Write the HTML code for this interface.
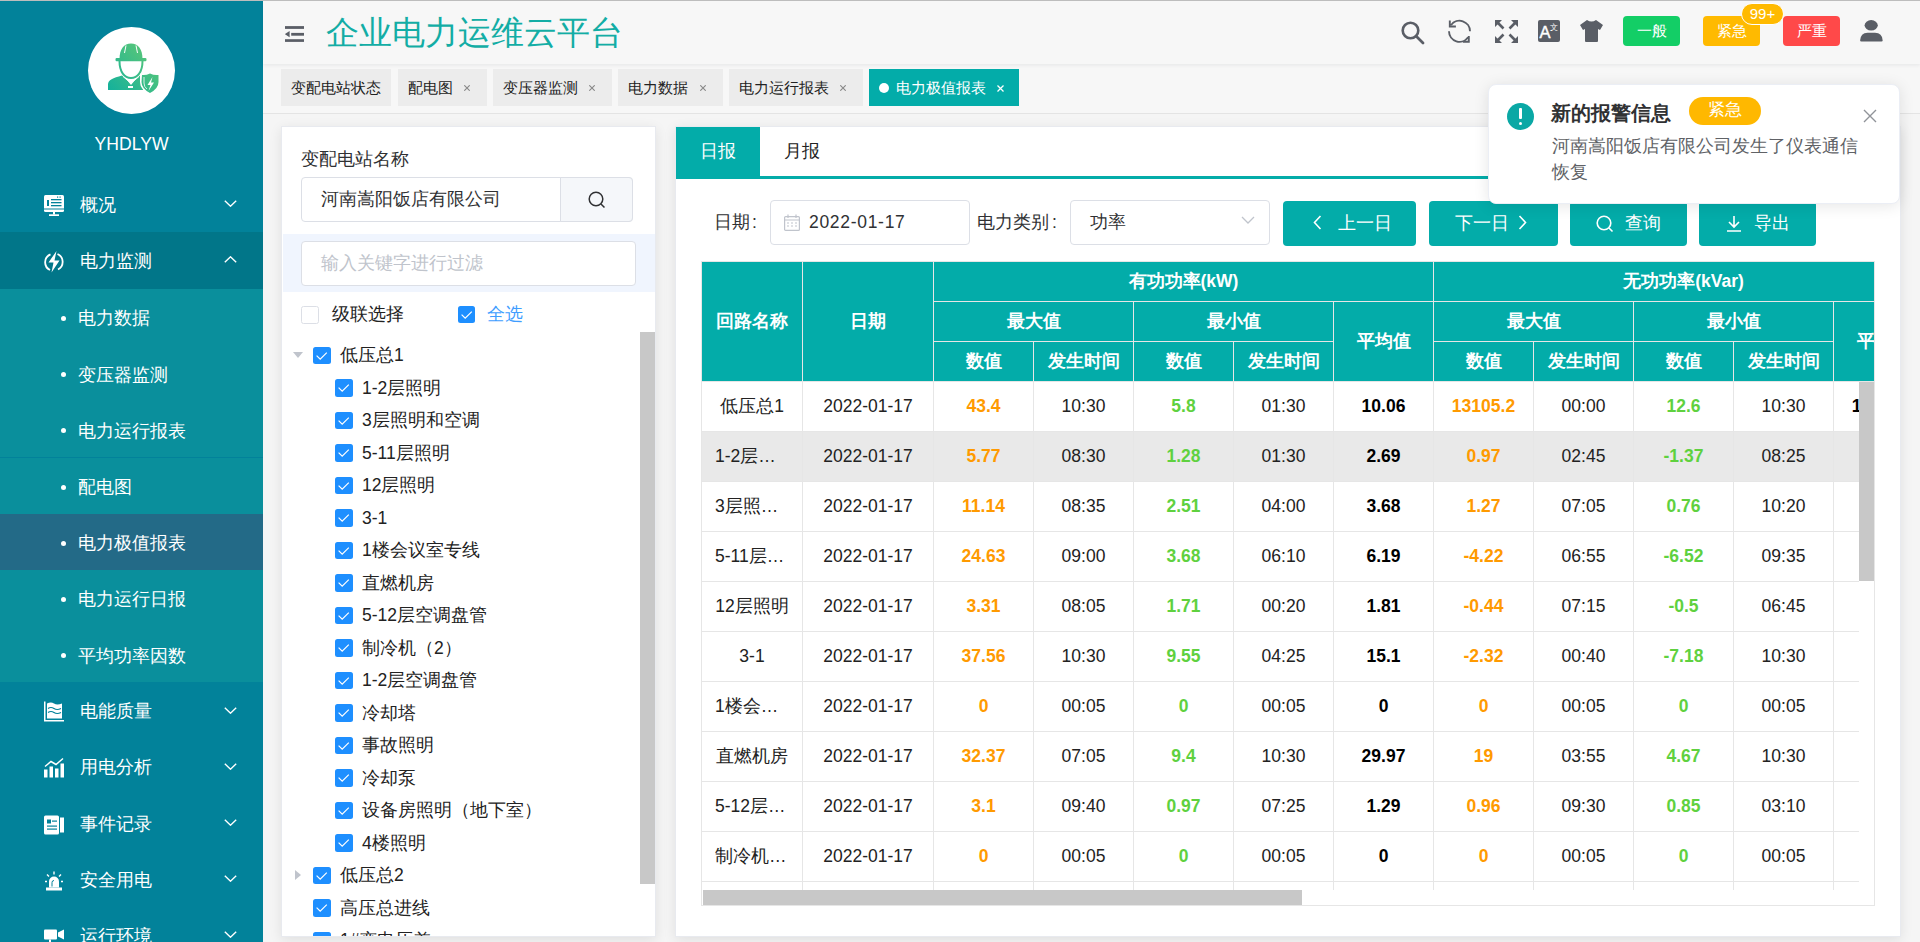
<!DOCTYPE html>
<html><head><meta charset="utf-8"><style>
*{box-sizing:border-box;margin:0;padding:0}
html,body{width:1920px;height:942px;overflow:hidden}
body{font-family:"Liberation Sans",sans-serif;background:#f5f5f5;position:relative;color:#303133}
.abs{position:absolute}
.topline{position:absolute;left:0;top:0;width:1920px;height:1px;background:#bdbdbd;z-index:50}
#side{position:absolute;left:0;top:0;width:263px;height:942px;background:#02829a;overflow:hidden;color:#fff}
.logo{position:absolute;left:88px;top:27px;width:87px;height:87px;border-radius:50%;background:#fff}
.uname{position:absolute;left:0;width:263px;top:133px;text-align:center;font-size:17.6px;line-height:22px}
.mi{position:absolute;left:0;width:263px;height:57.1px;font-size:17.5px;line-height:56px}
.mi .t{position:absolute;left:80px;top:1px}
.mi svg.ic{position:absolute;left:44px;top:19px;width:20px;height:21px}
.mi svg.ar{position:absolute;left:224px;top:24.5px;width:13px;height:7px}
.sub{position:absolute;left:0;width:263px;height:56.2px;font-size:17.5px;line-height:56px;background:#0a8f9c}
.sub .t{position:absolute;left:78px;top:1.5px}
.sub .dot{position:absolute;left:61px;top:27px;width:5px;height:5px;border-radius:50%;background:#fff}
#hdr{position:absolute;left:263px;top:0;width:1657px;height:64px;background:#f7f7f7;box-shadow:0 1px 4px rgba(0,21,41,.08);z-index:5}
#tags{position:absolute;left:263px;top:64px;width:1657px;height:50px;background:#f7f7f7;border-bottom:1px solid #e4e4e4}
.tag{position:absolute;top:5px;height:37px;background:#ececec;font-size:15px;line-height:37px;color:#222;padding-left:10px;white-space:nowrap}
.tag .x{position:absolute;top:0;font-size:13px;color:#777}
.card{position:absolute;background:#fff;box-shadow:0 3px 12px rgba(0,0,0,.09);border:1px solid #e8eaef}
.cb{position:absolute;width:17.5px;height:17.5px;border-radius:2.5px;background:#1e8fff}
.cb svg{position:absolute;left:0;top:0;width:17.5px;height:17.5px}
.tn{position:absolute;font-size:17.5px;line-height:22px;color:#222;white-space:nowrap}
.btn{position:absolute;top:201px;height:45px;background:#03aca9;border-radius:4px;color:#fff;font-size:17.5px;line-height:45px;white-space:nowrap}
.th{position:absolute;background:#03aca9;color:#fff;font-weight:bold;font-size:17.5px;text-align:center;border-right:1px solid #e6e6e6;border-bottom:1px solid #e6e6e6;display:flex;align-items:center;justify-content:center;white-space:nowrap;overflow:hidden;padding-bottom:2px}
.row{position:absolute;left:0;height:50px;width:1300px;border-bottom:1px solid #e6e6e6}
.td{position:absolute;top:0;height:49px;border-right:1px solid #e6e6e6;text-align:center;line-height:49px;font-size:17.5px;color:#222;white-space:nowrap;overflow:hidden}
.o{color:#ff9a00;font-weight:bold}
.g{color:#5fd13f;font-weight:bold}
.b{color:#000;font-weight:bold}
</style></head><body>
<div class="topline"></div>
<div id="side">
<div class="logo"><svg style="position:absolute;left:0;top:0" width="87" height="87" viewBox="88 27 87 87"><defs><linearGradient id="lg" gradientUnits="userSpaceOnUse" x1="108" y1="92" x2="158" y2="45"><stop offset="0" stop-color="#12b09c"/><stop offset="1" stop-color="#66ca72"/></linearGradient></defs><path d="M119.5 59 C119.5 49 124 43.5 131 43.5 C138 43.5 142.5 49 142.5 59 Z" fill="url(#lg)"/><rect x="115.5" y="58" width="31" height="3.2" rx="1.2" fill="url(#lg)"/><path d="M126 45.5 L124.5 53 M136 45.5 L137.5 53" stroke="#fff" stroke-width="1"/><path d="M119.5 61 C119.5 72 124.5 78 131 78 C137.5 78 142.5 72 142.5 61" fill="none" stroke="url(#lg)" stroke-width="2"/><path d="M108 90 L108 84.5 C108 80 113 78 122 75.5 L127 80 L131 85 L135 80 L140 75.5 C141 76 142 76.5 143 77.5 L143 90 Z" fill="url(#lg)"/><path d="M123 76.5 L129.5 82 M139 76.5 L132.5 82" stroke="#fff" stroke-width="0.9"/><rect x="128" y="86" width="5" height="2" fill="#fff"/><path d="M140 73.5 Q145 74.5 150 72 Q155 74.5 160 73.5 L160 82 Q160 89.5 150 94.5 Q140 89.5 140 82 Z" fill="#fff"/><path d="M142 75 Q146 75.5 150 73.5 Q154 75.5 158.5 75 L158.5 82 Q158.5 88.5 150 93 Q141.5 88.5 141.5 82 Z" fill="url(#lg)"/><path d="M144 77 L144 83 Q144 87 147 89" fill="none" stroke="#fff" stroke-width="0.8"/><path d="M152.5 77 L147.5 85 L150.5 85 L148.5 91 L154 82.5 L151 82.5 Z" fill="#fff"/></svg></div>
<div class="uname">YHDLYW</div>
<div class="mi" style="top:175.5px"><svg class="ic" viewBox="0 0 20 21"><rect x="0" y="0" width="20" height="17" rx="1.5" fill="#fff"/><rect x="3" y="5" width="2" height="6" fill="#02829a"/><rect x="7" y="4" width="10.5" height="1.3" fill="#02829a"/><rect x="7" y="7" width="10.5" height="1.3" fill="#02829a"/><rect x="7" y="10" width="10.5" height="1.3" fill="#02829a"/><rect x="13" y="1.5" width="1.2" height="1.2" fill="#02829a"/><rect x="15.5" y="1.5" width="1.2" height="1.2" fill="#02829a"/><rect x="0" y="13.5" width="20" height="1" fill="#02829a"/><rect x="9" y="17" width="2" height="2.5" fill="#fff"/><rect x="5" y="19.3" width="10" height="1.7" fill="#fff"/></svg><span class="t">概况</span><svg class="ar" viewBox="0 0 13 7"><path d="M0.8 0.8 L6.5 6.2 L12.2 0.8" fill="none" stroke="#fff" stroke-width="1.4"/></svg></div>
<div class="mi" style="top:231.7px;background:#017689"><svg class="ic" viewBox="0 0 20 20" style="overflow:visible"><path d="M6.5 2.8 A8.6 8.6 0 0 0 6 18.5" fill="none" stroke="#fff" stroke-width="1.8"/><path d="M13.5 2.5 A8.6 8.6 0 0 1 14 18" fill="none" stroke="#fff" stroke-width="1.8"/><path d="M12.5 -0.5 L4.5 11 L9.5 11 L7.5 21 L15.5 9 L10.5 9 Z" fill="#fff"/></svg><span class="t">电力监测</span><svg class="ar" viewBox="0 0 13 7"><path d="M0.8 6.2 L6.5 0.8 L12.2 6.2" fill="none" stroke="#fff" stroke-width="1.4"/></svg></div>
<div class="sub" style="top:288.9px"><span class="dot"></span><span class="t">电力数据</span></div>
<div class="sub" style="top:345.1px"><span class="dot"></span><span class="t">变压器监测</span></div>
<div class="sub" style="top:401.3px"><span class="dot"></span><span class="t">电力运行报表</span></div>
<div class="sub" style="top:457.5px"><span class="dot"></span><span class="t">配电图</span></div>
<div class="sub" style="top:513.7px;background:#236a87"><span class="dot"></span><span class="t">电力极值报表</span></div>
<div class="sub" style="top:569.9px"><span class="dot"></span><span class="t">电力运行日报</span></div>
<div class="sub" style="top:626.1px"><span class="dot"></span><span class="t">平均功率因数</span></div>
<div class="mi" style="top:682.3px"><svg class="ic" viewBox="0 0 20 20"><path d="M0 0 V20 H20 V18.5 H1.5 V0 Z" fill="#fff"/><path d="M3 2 Q7 0 10 2 T18 2 V17 H3 Z" fill="#fff"/><path d="M4 7 Q7 5 10 7 T17 7 M4 11 Q7 9 10 11 T17 11" fill="none" stroke="#02829a" stroke-width="1.2"/></svg><span class="t">电能质量</span><svg class="ar" viewBox="0 0 13 7"><path d="M0.8 0.8 L6.5 6.2 L12.2 0.8" fill="none" stroke="#fff" stroke-width="1.4"/></svg></div>
<div class="mi" style="top:738.4px"><svg class="ic" viewBox="0 0 20 20"><rect x="0" y="12" width="3.5" height="8" fill="#fff"/><rect x="5.5" y="9" width="3.5" height="11" fill="#fff"/><rect x="11" y="11" width="3.5" height="9" fill="#fff"/><rect x="16.5" y="6" width="3.5" height="14" fill="#fff"/><path d="M1 9 L7 4 L12 7 L19 1" fill="none" stroke="#fff" stroke-width="1.5"/></svg><span class="t">用电分析</span><svg class="ar" viewBox="0 0 13 7"><path d="M0.8 0.8 L6.5 6.2 L12.2 0.8" fill="none" stroke="#fff" stroke-width="1.4"/></svg></div>
<div class="mi" style="top:794.5px"><svg class="ic" viewBox="0 0 20 20"><rect x="0" y="1" width="15" height="19" rx="1.5" fill="#fff"/><rect x="16" y="3" width="4" height="15" fill="#fff"/><rect x="3" y="5" width="4" height="4" fill="#02829a"/><rect x="8" y="6" width="5" height="1.2" fill="#02829a"/><rect x="3" y="11" width="10" height="1.2" fill="#02829a"/><rect x="3" y="14" width="10" height="1.2" fill="#02829a"/></svg><span class="t">事件记录</span><svg class="ar" viewBox="0 0 13 7"><path d="M0.8 0.8 L6.5 6.2 L12.2 0.8" fill="none" stroke="#fff" stroke-width="1.4"/></svg></div>
<div class="mi" style="top:850.6px"><svg class="ic" viewBox="0 0 20 20"><path d="M5 17 V11 A5 5 0 0 1 15 11 V17 Z" fill="#fff"/><rect x="2" y="17" width="16" height="3" fill="#fff"/><rect x="9.3" y="1" width="1.4" height="3" fill="#fff"/><path d="M3 4 L5 6 M17 4 L15 6 M1 11 H3 M17 11 H19" stroke="#fff" stroke-width="1.4"/><path d="M8 16 V12 A2 2 0 0 1 10 10" fill="none" stroke="#02829a" stroke-width="1"/></svg><span class="t">安全用电</span><svg class="ar" viewBox="0 0 13 7"><path d="M0.8 0.8 L6.5 6.2 L12.2 0.8" fill="none" stroke="#fff" stroke-width="1.4"/></svg></div>
<div class="mi" style="top:906.7px"><svg class="ic" viewBox="0 0 20 20"><rect x="0" y="3" width="13" height="10" rx="1" fill="#fff"/><path d="M14 6 L20 3 V13 L14 10 Z" fill="#fff"/><rect x="5" y="13" width="2" height="7" fill="#fff"/></svg><span class="t">运行环境</span><svg class="ar" viewBox="0 0 13 7"><path d="M0.8 0.8 L6.5 6.2 L12.2 0.8" fill="none" stroke="#fff" stroke-width="1.4"/></svg></div>
</div>
<div id="hdr">
<svg class="abs" style="left:22px;top:26px" width="19" height="16" viewBox="0 0 19 16"><rect x="0" y="0.1" width="19" height="2.8" fill="#5a5e66"/><rect x="6.2" y="6.9" width="12.8" height="2.8" fill="#5a5e66"/><rect x="0" y="13.2" width="19" height="2.7" fill="#5a5e66"/><path d="M-0.2 8.2 L4.6 5 V11.2 Z" fill="#5a5e66"/></svg>
<div class="abs" style="left:63px;top:11px;font-size:32.5px;line-height:44px;color:#13ada5;white-space:nowrap">企业电力运维云平台</div>
<svg class="abs" style="left:1138px;top:21px" width="24" height="24" viewBox="0 0 24 24"><circle cx="9.5" cy="9.5" r="7.8" fill="none" stroke="#5a5e66" stroke-width="2.6"/><path d="M15.5 15.5 L22 22" stroke="#5a5e66" stroke-width="2.8" stroke-linecap="round"/></svg>
<svg class="abs" style="left:1184px;top:19px" width="24" height="24" viewBox="0 0 24 24"><path d="M23 12.3 A10.5 10.5 0 0 0 4.1 6.0 M2.8 1.4 V7.5 H8.9 M2 12.3 A10.5 10.5 0 0 0 21.1 18.3 M21.8 17 V22.8 H16" fill="none" stroke="#5a5e66" stroke-width="1.9"/></svg>
<svg class="abs" style="left:1232px;top:20px" width="23" height="23" viewBox="0 0 23 23"><path d="M0 0 H7 L0 7 Z M23 0 V7 L16 0 Z M0 23 V16 L7 23 Z M23 23 H16 L23 16 Z" fill="#5a5e66"/><path d="M2 2 L8.5 8.5 M21 2 L14.5 8.5 M2 21 L8.5 14.5 M21 21 L14.5 14.5" stroke="#5a5e66" stroke-width="2.6"/></svg>
<div class="abs" style="left:1275px;top:20px;width:22px;height:22px;background:#5a5e66;border-radius:2px;overflow:hidden"><span class="abs" style="left:1.5px;top:4.3px;font-size:16.5px;line-height:16px;color:#fff;-webkit-text-stroke:0.4px #fff">A</span><span class="abs" style="left:12px;top:3px;font-size:8px;line-height:9px;color:#fff">文</span></div>
<svg class="abs" style="left:1317px;top:20px" width="23" height="22" viewBox="0 0 23 22"><path d="M7 0 Q11.5 3 16 0 L23 5 L20 10 L18 9 V21 Q18 22 17 22 H6 Q5 22 5 21 V9 L3 10 L0 5 Z" fill="#5a5e66"/></svg>
<div class="abs" style="left:1360px;top:16px;width:57px;height:30px;border-radius:4px;background:#13ce66;color:#fff;font-size:15px;line-height:30px;text-align:center">一般</div>
<div class="abs" style="left:1440px;top:16px;width:57px;height:30px;border-radius:4px;background:#ffba00;color:#fff;font-size:15px;line-height:30px;text-align:center">紧急</div>
<div class="abs" style="left:1520px;top:16px;width:57px;height:30px;border-radius:4px;background:#ff4949;color:#fff;font-size:15px;line-height:30px;text-align:center">严重</div>
<div class="abs" style="left:1478px;top:3px;width:43px;height:22px;border-radius:11px;background:#ffba00;border:1.5px solid #fff;color:#fff;font-size:15px;line-height:19px;text-align:center">99+</div>
<svg class="abs" style="left:1596px;top:19px" width="25" height="24" viewBox="0 0 25 24"><ellipse cx="12.2" cy="6.35" rx="6.6" ry="5.25" fill="#5a5e66"/><path d="M1.1 21.5 Q1.6 13.8 8.5 13.8 H16 Q23.2 13.8 23.7 21.5 Q23.7 22.4 22.5 22.4 H2.3 Q1.1 22.4 1.1 21.5 Z" fill="#5a5e66"/></svg>
</div>
<div id="tags">
<div class="tag" style="left:18px;width:110px">变配电站状态</div>
<div class="tag" style="left:135px;width:89px">配电图<svg class="abs" style="left:65.5px;top:16px" width="6" height="6" viewBox="0 0 6 6"><path d="M0.3 0.3 L5.7 5.7 M5.7 0.3 L0.3 5.7" stroke="#888" stroke-width="1.1"/></svg></div>
<div class="tag" style="left:230px;width:119px">变压器监测<svg class="abs" style="left:95.5px;top:16px" width="6" height="6" viewBox="0 0 6 6"><path d="M0.3 0.3 L5.7 5.7 M5.7 0.3 L0.3 5.7" stroke="#888" stroke-width="1.1"/></svg></div>
<div class="tag" style="left:355px;width:105px">电力数据<svg class="abs" style="left:81.5px;top:16px" width="6" height="6" viewBox="0 0 6 6"><path d="M0.3 0.3 L5.7 5.7 M5.7 0.3 L0.3 5.7" stroke="#888" stroke-width="1.1"/></svg></div>
<div class="tag" style="left:466px;width:134px">电力运行报表<svg class="abs" style="left:110.5px;top:16px" width="6" height="6" viewBox="0 0 6 6"><path d="M0.3 0.3 L5.7 5.7 M5.7 0.3 L0.3 5.7" stroke="#888" stroke-width="1.1"/></svg></div>
<div class="tag" style="left:606px;width:150px;background:#03aca9;color:#fff"><span class="abs" style="left:10px;top:14px;width:10px;height:10px;border-radius:50%;background:#fff"></span><span class="abs" style="left:27px;top:0">电力极值报表</span><svg class="abs" style="left:128px;top:16px" width="7" height="7" viewBox="0 0 7 7"><path d="M0.5 0.5 L6.5 6.5 M6.5 0.5 L0.5 6.5" stroke="#fff" stroke-width="1.3"/></svg></div>
</div>
<div class="card" style="left:281px;top:126px;width:375px;height:811px;overflow:hidden">
<div class="abs" style="left:19px;top:21px;font-size:17.5px;line-height:22px;color:#303133">变配电站名称</div>
<div class="abs" style="left:19px;top:50px;width:332px;height:45px;border:1px solid #dcdfe6;border-radius:4px;background:#fff"></div>
<div class="abs" style="left:39px;top:61px;font-size:17.5px;line-height:22px;color:#303133">河南嵩阳饭店有限公司</div>
<div class="abs" style="left:278px;top:50px;width:73px;height:45px;border:1px solid #dcdfe6;border-radius:0 4px 4px 0;background:#f5f7fa"></div>
<svg class="abs" style="left:306px;top:64px" width="18" height="18" viewBox="0 0 18 18"><circle cx="8" cy="8" r="6.8" fill="none" stroke="#303133" stroke-width="1.5"/><path d="M13 13 L16.5 16.5" stroke="#303133" stroke-width="1.5"/></svg>
<div class="abs" style="left:1px;top:107px;width:372px;height:58px;background:#f0f5fe"></div>
<div class="abs" style="left:19px;top:114px;width:335px;height:45px;border:1px solid #dcdfe6;border-radius:4px;background:#fff"></div>
<div class="abs" style="left:39px;top:125px;font-size:17.5px;line-height:22px;color:#c0c4cc">输入关键字进行过滤</div>
<div class="abs" style="left:19px;top:179px;width:18px;height:18px;border:1px solid #dcdfe6;border-radius:2.5px;background:#fff"></div>
<div class="tn" style="left:50px;top:176px">级联选择</div>
<div class="cb" style="left:176px;top:179px;width:17px;height:17px"><svg viewBox="0 0 17.5 17.5"><path d="M3.6 8.6 L7.2 12.2 L13.8 5.6" fill="none" stroke="#fff" stroke-width="1.2"/></svg></div>
<div class="tn" style="left:205px;top:176px;color:#409eff">全选</div>
<div class="abs" style="left:1px;top:205px;width:372px;height:604px;overflow:hidden">
<svg class="abs" style="left:10px;top:20.0px" width="10" height="6" viewBox="0 0 10 6"><path d="M0 0 H10 L5 6 Z" fill="#c0c4cc"/></svg>
<div class="cb" style="left:30px;top:14.5px"><svg viewBox="0 0 17.5 17.5"><path d="M3.6 8.6 L7.2 12.2 L13.8 5.6" fill="none" stroke="#fff" stroke-width="1.2"/></svg></div>
<div class="tn" style="left:57px;top:12.0px">低压总1</div>
<div class="cb" style="left:52px;top:47.0px"><svg viewBox="0 0 17.5 17.5"><path d="M3.6 8.6 L7.2 12.2 L13.8 5.6" fill="none" stroke="#fff" stroke-width="1.2"/></svg></div>
<div class="tn" style="left:79px;top:44.5px">1-2层照明</div>
<div class="cb" style="left:52px;top:79.5px"><svg viewBox="0 0 17.5 17.5"><path d="M3.6 8.6 L7.2 12.2 L13.8 5.6" fill="none" stroke="#fff" stroke-width="1.2"/></svg></div>
<div class="tn" style="left:79px;top:77.0px">3层照明和空调</div>
<div class="cb" style="left:52px;top:112.0px"><svg viewBox="0 0 17.5 17.5"><path d="M3.6 8.6 L7.2 12.2 L13.8 5.6" fill="none" stroke="#fff" stroke-width="1.2"/></svg></div>
<div class="tn" style="left:79px;top:109.5px">5-11层照明</div>
<div class="cb" style="left:52px;top:144.5px"><svg viewBox="0 0 17.5 17.5"><path d="M3.6 8.6 L7.2 12.2 L13.8 5.6" fill="none" stroke="#fff" stroke-width="1.2"/></svg></div>
<div class="tn" style="left:79px;top:142.0px">12层照明</div>
<div class="cb" style="left:52px;top:177.0px"><svg viewBox="0 0 17.5 17.5"><path d="M3.6 8.6 L7.2 12.2 L13.8 5.6" fill="none" stroke="#fff" stroke-width="1.2"/></svg></div>
<div class="tn" style="left:79px;top:174.5px">3-1</div>
<div class="cb" style="left:52px;top:209.5px"><svg viewBox="0 0 17.5 17.5"><path d="M3.6 8.6 L7.2 12.2 L13.8 5.6" fill="none" stroke="#fff" stroke-width="1.2"/></svg></div>
<div class="tn" style="left:79px;top:207.0px">1楼会议室专线</div>
<div class="cb" style="left:52px;top:242.0px"><svg viewBox="0 0 17.5 17.5"><path d="M3.6 8.6 L7.2 12.2 L13.8 5.6" fill="none" stroke="#fff" stroke-width="1.2"/></svg></div>
<div class="tn" style="left:79px;top:239.5px">直燃机房</div>
<div class="cb" style="left:52px;top:274.5px"><svg viewBox="0 0 17.5 17.5"><path d="M3.6 8.6 L7.2 12.2 L13.8 5.6" fill="none" stroke="#fff" stroke-width="1.2"/></svg></div>
<div class="tn" style="left:79px;top:272.0px">5-12层空调盘管</div>
<div class="cb" style="left:52px;top:307.0px"><svg viewBox="0 0 17.5 17.5"><path d="M3.6 8.6 L7.2 12.2 L13.8 5.6" fill="none" stroke="#fff" stroke-width="1.2"/></svg></div>
<div class="tn" style="left:79px;top:304.5px">制冷机（2）</div>
<div class="cb" style="left:52px;top:339.5px"><svg viewBox="0 0 17.5 17.5"><path d="M3.6 8.6 L7.2 12.2 L13.8 5.6" fill="none" stroke="#fff" stroke-width="1.2"/></svg></div>
<div class="tn" style="left:79px;top:337.0px">1-2层空调盘管</div>
<div class="cb" style="left:52px;top:372.0px"><svg viewBox="0 0 17.5 17.5"><path d="M3.6 8.6 L7.2 12.2 L13.8 5.6" fill="none" stroke="#fff" stroke-width="1.2"/></svg></div>
<div class="tn" style="left:79px;top:369.5px">冷却塔</div>
<div class="cb" style="left:52px;top:404.5px"><svg viewBox="0 0 17.5 17.5"><path d="M3.6 8.6 L7.2 12.2 L13.8 5.6" fill="none" stroke="#fff" stroke-width="1.2"/></svg></div>
<div class="tn" style="left:79px;top:402.0px">事故照明</div>
<div class="cb" style="left:52px;top:437.0px"><svg viewBox="0 0 17.5 17.5"><path d="M3.6 8.6 L7.2 12.2 L13.8 5.6" fill="none" stroke="#fff" stroke-width="1.2"/></svg></div>
<div class="tn" style="left:79px;top:434.5px">冷却泵</div>
<div class="cb" style="left:52px;top:469.5px"><svg viewBox="0 0 17.5 17.5"><path d="M3.6 8.6 L7.2 12.2 L13.8 5.6" fill="none" stroke="#fff" stroke-width="1.2"/></svg></div>
<div class="tn" style="left:79px;top:467.0px">设备房照明（地下室）</div>
<div class="cb" style="left:52px;top:502.0px"><svg viewBox="0 0 17.5 17.5"><path d="M3.6 8.6 L7.2 12.2 L13.8 5.6" fill="none" stroke="#fff" stroke-width="1.2"/></svg></div>
<div class="tn" style="left:79px;top:499.5px">4楼照明</div>
<svg class="abs" style="left:12px;top:538.0px" width="6" height="10" viewBox="0 0 6 10"><path d="M0 0 V10 L6 5 Z" fill="#c0c4cc"/></svg>
<div class="cb" style="left:30px;top:534.5px"><svg viewBox="0 0 17.5 17.5"><path d="M3.6 8.6 L7.2 12.2 L13.8 5.6" fill="none" stroke="#fff" stroke-width="1.2"/></svg></div>
<div class="tn" style="left:57px;top:532.0px">低压总2</div>
<div class="cb" style="left:30px;top:567.0px"><svg viewBox="0 0 17.5 17.5"><path d="M3.6 8.6 L7.2 12.2 L13.8 5.6" fill="none" stroke="#fff" stroke-width="1.2"/></svg></div>
<div class="tn" style="left:57px;top:564.5px">高压总进线</div>
<div class="cb" style="left:30px;top:599.5px"><svg viewBox="0 0 17.5 17.5"><path d="M3.6 8.6 L7.2 12.2 L13.8 5.6" fill="none" stroke="#fff" stroke-width="1.2"/></svg></div>
<div class="tn" style="left:57px;top:597.0px">1#变电压差</div>
<div class="abs" style="left:357px;top:0;width:15px;height:552px;background:#c8c8c8"></div>
</div>
</div>
<div class="card" style="left:675px;top:126px;width:1226px;height:811px;overflow:hidden">
<div class="abs" style="left:0px;top:49px;width:1224px;height:3px;background:#03aca9"></div>
<div class="abs" style="left:0px;top:0px;width:84px;height:49px;background:#03aca9;color:#fff;font-size:17.5px;line-height:49px;text-align:center">日报</div>
<div class="abs" style="left:84px;top:0px;width:84px;height:49px;color:#222;font-size:17.5px;line-height:49px;text-align:center">月报</div>
<div class="abs" style="left:38px;top:84px;font-size:17.5px;line-height:22px;color:#303133">日期<span style="padding-left:2px">:</span></div>
<div class="abs" style="left:94px;top:73px;width:200px;height:45px;border:1px solid #dcdfe6;border-radius:4px"></div>
<svg class="abs" style="left:108px;top:87px" width="16" height="17" viewBox="0 0 16 17"><rect x="0.6" y="2.6" width="14.8" height="13.8" rx="1" fill="none" stroke="#c0c4cc" stroke-width="1.2"/><path d="M0.6 6 H15.4 M4 0.5 V4 M12 0.5 V4" stroke="#c0c4cc" stroke-width="1.2"/><path d="M3 9 H5 M7 9 H9 M11 9 H13 M3 12 H5 M7 12 H9 M11 12 H13" stroke="#c0c4cc" stroke-width="1.2"/></svg>
<div class="abs" style="left:133px;top:84px;font-size:17.5px;line-height:22px;color:#303133;letter-spacing:0.7px">2022-01-17</div>
<div class="abs" style="left:301px;top:84px;font-size:17.5px;line-height:22px;color:#303133">电力类别<span style="padding-left:3px">:</span></div>
<div class="abs" style="left:394px;top:73px;width:200px;height:45px;border:1px solid #dcdfe6;border-radius:4px"></div>
<div class="abs" style="left:414px;top:84px;font-size:17.5px;line-height:22px;color:#303133">功率</div>
<svg class="abs" style="left:565px;top:89px" width="14" height="8" viewBox="0 0 14 8"><path d="M1 1 L7 7 L13 1" fill="none" stroke="#c0c4cc" stroke-width="1.3"/></svg>
<div class="btn" style="left:607px;top:74px;width:133px"><svg class="abs" style="left:29.5px;top:14px" width="9" height="15" viewBox="0 0 9 15"><path d="M7.5 1 L1.5 7.5 L7.5 14" fill="none" stroke="#fff" stroke-width="1.6"/></svg><span class="abs" style="left:54.5px;top:0">上一日</span></div>
<div class="btn" style="left:753px;top:74px;width:129px"><span class="abs" style="left:25.8px;top:0">下一日</span><svg class="abs" style="left:89px;top:14px" width="9" height="15" viewBox="0 0 9 15"><path d="M1.5 1 L7.5 7.5 L1.5 14" fill="none" stroke="#fff" stroke-width="1.6"/></svg></div>
<div class="btn" style="left:894px;top:74px;width:117px"><svg class="abs" style="left:26px;top:14px" width="18" height="18" viewBox="0 0 18 18"><circle cx="8" cy="8" r="6.8" fill="none" stroke="#fff" stroke-width="1.6"/><path d="M13 13 L16.5 16.5" stroke="#fff" stroke-width="1.6"/></svg><span class="abs" style="left:55px;top:0">查询</span></div>
<div class="btn" style="left:1023px;top:74px;width:117px"><svg class="abs" style="left:27px;top:14px" width="16" height="17" viewBox="0 0 16 17"><path d="M8 1 V12 M3 7 L8 12 L13 7 M1 16 H15" fill="none" stroke="#fff" stroke-width="1.6"/></svg><span class="abs" style="left:55px;top:0">导出</span></div>
<div class="abs" style="left:25px;top:134px;width:1174px;height:645px;border:1px solid #e6e6e6;overflow:hidden">
<div class="th" style="left:0px;top:0px;width:101px;height:120px">回路名称</div>
<div class="th" style="left:101px;top:0px;width:131px;height:120px">日期</div>
<div class="th" style="left:232px;top:0px;width:500px;height:40px">有功功率(kW)</div>
<div class="th" style="left:732px;top:0px;width:500px;height:40px">无功功率(kVar)</div>
<div class="th" style="left:232px;top:40px;width:200px;height:40px">最大值</div>
<div class="th" style="left:432px;top:40px;width:200px;height:40px">最小值</div>
<div class="th" style="left:632px;top:40px;width:100px;height:80px">平均值</div>
<div class="th" style="left:232px;top:80px;width:100px;height:40px">数值</div>
<div class="th" style="left:332px;top:80px;width:100px;height:40px">发生时间</div>
<div class="th" style="left:432px;top:80px;width:100px;height:40px">数值</div>
<div class="th" style="left:532px;top:80px;width:100px;height:40px">发生时间</div>
<div class="th" style="left:732px;top:40px;width:200px;height:40px">最大值</div>
<div class="th" style="left:932px;top:40px;width:200px;height:40px">最小值</div>
<div class="th" style="left:1132px;top:40px;width:100px;height:80px">平均值</div>
<div class="th" style="left:732px;top:80px;width:100px;height:40px">数值</div>
<div class="th" style="left:832px;top:80px;width:100px;height:40px">发生时间</div>
<div class="th" style="left:932px;top:80px;width:100px;height:40px">数值</div>
<div class="th" style="left:1032px;top:80px;width:100px;height:40px">发生时间</div>
<div class="abs" style="left:0px;top:120px;width:1157px;height:508px;overflow:hidden">
<div class="row" style="top:0px">
<div class="td " style="left:0px;width:101px;">低压总1</div>
<div class="td " style="left:101px;width:131px">2022-01-17</div>
<div class="td o" style="left:232px;width:100px">43.4</div>
<div class="td " style="left:332px;width:100px">10:30</div>
<div class="td g" style="left:432px;width:100px">5.8</div>
<div class="td " style="left:532px;width:100px">01:30</div>
<div class="td b" style="left:632px;width:100px">10.06</div>
<div class="td o" style="left:732px;width:100px">13105.2</div>
<div class="td " style="left:832px;width:100px">00:00</div>
<div class="td g" style="left:932px;width:100px">12.6</div>
<div class="td " style="left:1032px;width:100px">10:30</div>
<div class="td b" style="left:1132px;width:100px">1306.36</div>
</div>
<div class="row" style="top:50px;background:#e9e9e9">
<div class="td " style="left:0px;width:101px;text-align:left;padding-left:13px">1-2层…</div>
<div class="td " style="left:101px;width:131px">2022-01-17</div>
<div class="td o" style="left:232px;width:100px">5.77</div>
<div class="td " style="left:332px;width:100px">08:30</div>
<div class="td g" style="left:432px;width:100px">1.28</div>
<div class="td " style="left:532px;width:100px">01:30</div>
<div class="td b" style="left:632px;width:100px">2.69</div>
<div class="td o" style="left:732px;width:100px">0.97</div>
<div class="td " style="left:832px;width:100px">02:45</div>
<div class="td g" style="left:932px;width:100px">-1.37</div>
<div class="td " style="left:1032px;width:100px">08:25</div>
<div class="td b" style="left:1132px;width:100px"></div>
</div>
<div class="row" style="top:100px">
<div class="td " style="left:0px;width:101px;text-align:left;padding-left:13px">3层照…</div>
<div class="td " style="left:101px;width:131px">2022-01-17</div>
<div class="td o" style="left:232px;width:100px">11.14</div>
<div class="td " style="left:332px;width:100px">08:35</div>
<div class="td g" style="left:432px;width:100px">2.51</div>
<div class="td " style="left:532px;width:100px">04:00</div>
<div class="td b" style="left:632px;width:100px">3.68</div>
<div class="td o" style="left:732px;width:100px">1.27</div>
<div class="td " style="left:832px;width:100px">07:05</div>
<div class="td g" style="left:932px;width:100px">0.76</div>
<div class="td " style="left:1032px;width:100px">10:20</div>
<div class="td b" style="left:1132px;width:100px"></div>
</div>
<div class="row" style="top:150px">
<div class="td " style="left:0px;width:101px;text-align:left;padding-left:13px">5-11层…</div>
<div class="td " style="left:101px;width:131px">2022-01-17</div>
<div class="td o" style="left:232px;width:100px">24.63</div>
<div class="td " style="left:332px;width:100px">09:00</div>
<div class="td g" style="left:432px;width:100px">3.68</div>
<div class="td " style="left:532px;width:100px">06:10</div>
<div class="td b" style="left:632px;width:100px">6.19</div>
<div class="td o" style="left:732px;width:100px">-4.22</div>
<div class="td " style="left:832px;width:100px">06:55</div>
<div class="td g" style="left:932px;width:100px">-6.52</div>
<div class="td " style="left:1032px;width:100px">09:35</div>
<div class="td b" style="left:1132px;width:100px"></div>
</div>
<div class="row" style="top:200px">
<div class="td " style="left:0px;width:101px;">12层照明</div>
<div class="td " style="left:101px;width:131px">2022-01-17</div>
<div class="td o" style="left:232px;width:100px">3.31</div>
<div class="td " style="left:332px;width:100px">08:05</div>
<div class="td g" style="left:432px;width:100px">1.71</div>
<div class="td " style="left:532px;width:100px">00:20</div>
<div class="td b" style="left:632px;width:100px">1.81</div>
<div class="td o" style="left:732px;width:100px">-0.44</div>
<div class="td " style="left:832px;width:100px">07:15</div>
<div class="td g" style="left:932px;width:100px">-0.5</div>
<div class="td " style="left:1032px;width:100px">06:45</div>
<div class="td b" style="left:1132px;width:100px"></div>
</div>
<div class="row" style="top:250px">
<div class="td " style="left:0px;width:101px;">3-1</div>
<div class="td " style="left:101px;width:131px">2022-01-17</div>
<div class="td o" style="left:232px;width:100px">37.56</div>
<div class="td " style="left:332px;width:100px">10:30</div>
<div class="td g" style="left:432px;width:100px">9.55</div>
<div class="td " style="left:532px;width:100px">04:25</div>
<div class="td b" style="left:632px;width:100px">15.1</div>
<div class="td o" style="left:732px;width:100px">-2.32</div>
<div class="td " style="left:832px;width:100px">00:40</div>
<div class="td g" style="left:932px;width:100px">-7.18</div>
<div class="td " style="left:1032px;width:100px">10:30</div>
<div class="td b" style="left:1132px;width:100px"></div>
</div>
<div class="row" style="top:300px">
<div class="td " style="left:0px;width:101px;text-align:left;padding-left:13px">1楼会…</div>
<div class="td " style="left:101px;width:131px">2022-01-17</div>
<div class="td o" style="left:232px;width:100px">0</div>
<div class="td " style="left:332px;width:100px">00:05</div>
<div class="td g" style="left:432px;width:100px">0</div>
<div class="td " style="left:532px;width:100px">00:05</div>
<div class="td b" style="left:632px;width:100px">0</div>
<div class="td o" style="left:732px;width:100px">0</div>
<div class="td " style="left:832px;width:100px">00:05</div>
<div class="td g" style="left:932px;width:100px">0</div>
<div class="td " style="left:1032px;width:100px">00:05</div>
<div class="td b" style="left:1132px;width:100px"></div>
</div>
<div class="row" style="top:350px">
<div class="td " style="left:0px;width:101px;">直燃机房</div>
<div class="td " style="left:101px;width:131px">2022-01-17</div>
<div class="td o" style="left:232px;width:100px">32.37</div>
<div class="td " style="left:332px;width:100px">07:05</div>
<div class="td g" style="left:432px;width:100px">9.4</div>
<div class="td " style="left:532px;width:100px">10:30</div>
<div class="td b" style="left:632px;width:100px">29.97</div>
<div class="td o" style="left:732px;width:100px">19</div>
<div class="td " style="left:832px;width:100px">03:55</div>
<div class="td g" style="left:932px;width:100px">4.67</div>
<div class="td " style="left:1032px;width:100px">10:30</div>
<div class="td b" style="left:1132px;width:100px"></div>
</div>
<div class="row" style="top:400px">
<div class="td " style="left:0px;width:101px;text-align:left;padding-left:13px">5-12层…</div>
<div class="td " style="left:101px;width:131px">2022-01-17</div>
<div class="td o" style="left:232px;width:100px">3.1</div>
<div class="td " style="left:332px;width:100px">09:40</div>
<div class="td g" style="left:432px;width:100px">0.97</div>
<div class="td " style="left:532px;width:100px">07:25</div>
<div class="td b" style="left:632px;width:100px">1.29</div>
<div class="td o" style="left:732px;width:100px">0.96</div>
<div class="td " style="left:832px;width:100px">09:30</div>
<div class="td g" style="left:932px;width:100px">0.85</div>
<div class="td " style="left:1032px;width:100px">03:10</div>
<div class="td b" style="left:1132px;width:100px"></div>
</div>
<div class="row" style="top:450px">
<div class="td " style="left:0px;width:101px;text-align:left;padding-left:13px">制冷机…</div>
<div class="td " style="left:101px;width:131px">2022-01-17</div>
<div class="td o" style="left:232px;width:100px">0</div>
<div class="td " style="left:332px;width:100px">00:05</div>
<div class="td g" style="left:432px;width:100px">0</div>
<div class="td " style="left:532px;width:100px">00:05</div>
<div class="td b" style="left:632px;width:100px">0</div>
<div class="td o" style="left:732px;width:100px">0</div>
<div class="td " style="left:832px;width:100px">00:05</div>
<div class="td g" style="left:932px;width:100px">0</div>
<div class="td " style="left:1032px;width:100px">00:05</div>
<div class="td b" style="left:1132px;width:100px"></div>
</div>
<div class="row" style="top:500px">
<div class="td " style="left:0px;width:101px;"></div>
<div class="td " style="left:101px;width:131px">2022-01-17</div>
<div class="td o" style="left:232px;width:100px"></div>
<div class="td " style="left:332px;width:100px"></div>
<div class="td g" style="left:432px;width:100px"></div>
<div class="td " style="left:532px;width:100px"></div>
<div class="td b" style="left:632px;width:100px"></div>
<div class="td o" style="left:732px;width:100px"></div>
<div class="td " style="left:832px;width:100px"></div>
<div class="td g" style="left:932px;width:100px"></div>
<div class="td " style="left:1032px;width:100px"></div>
<div class="td b" style="left:1132px;width:100px"></div>
</div>
</div>
<div class="abs" style="left:1157px;top:120px;width:15px;height:199px;background:#c8c8c8"></div>
<div class="abs" style="left:1px;top:628px;width:599px;height:15px;background:#c8c8c8"></div>
</div>
</div>
<div class="abs" style="left:1488px;top:84px;width:412px;height:120px;background:#fff;border:1px solid #ebeef5;border-radius:8px;box-shadow:0 2px 15px rgba(0,0,0,.1);z-index:20">
<div class="abs" style="left:18px;top:18px;width:27px;height:27px;border-radius:50%;background:#0aa8a5"></div>
<div class="abs" style="left:30px;top:23px;width:3px;height:11px;background:#fff;border-radius:1px"></div><div class="abs" style="left:30px;top:37px;width:3px;height:3px;background:#fff;border-radius:50%"></div>
<div class="abs" style="left:62px;top:15px;font-size:20px;line-height:26px;font-weight:bold;color:#303133">新的报警信息</div>
<div class="abs" style="left:200px;top:12px;width:72px;height:28px;border-radius:14px;background:#ffb800;color:#fff;font-size:17px;line-height:26px;text-align:center">紧急</div>
<svg class="abs" style="left:374px;top:24px" width="14" height="14" viewBox="0 0 14 14"><path d="M1 1 L13 13 M13 1 L1 13" stroke="#909399" stroke-width="1.4"/></svg>
<div class="abs" style="left:62.5px;top:48px;width:310px;font-size:17.5px;line-height:26px;color:#606266">河南嵩阳饭店有限公司发生了仪表通信恢复</div>
</div>
</body></html>
